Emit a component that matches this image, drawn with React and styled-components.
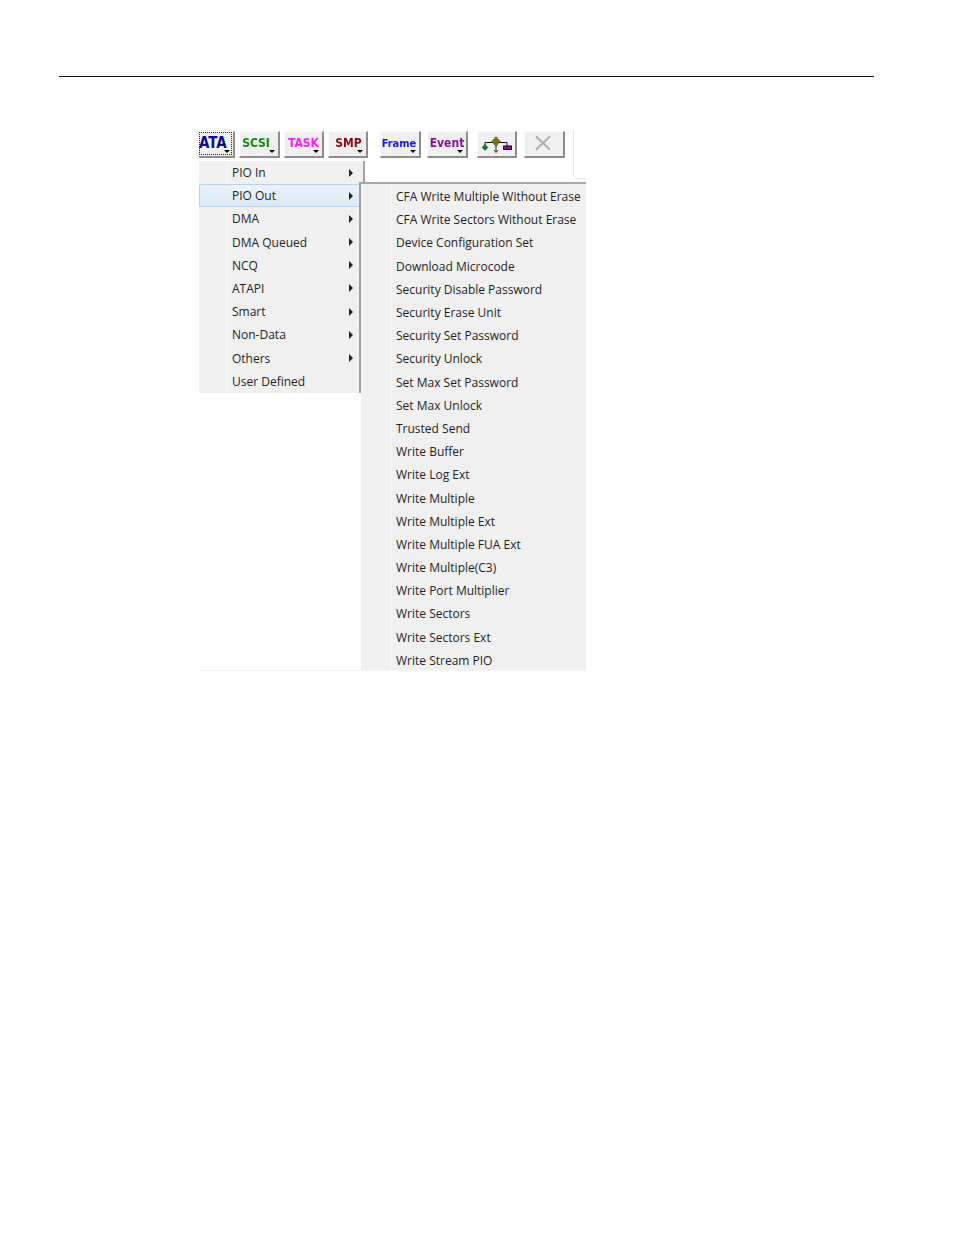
import React from 'react';
import styled, { createGlobalStyle } from 'styled-components';

const textButtons = [
  { label: 'SCSI', color: '#0a8a0a', width: 41, gap: 4, shift: -3 },
  { label: 'TASK', color: '#ff1cf0', width: 40, gap: 4, shift: 0 },
  { label: 'SMP', color: '#8b0a12', width: 40, gap: 4, shift: 1 },
  { label: 'Frame', color: '#1414ff', width: 41, gap: 12, shift: -1, size: 11 },
  { label: 'Event', color: '#8a0f96', width: 41, gap: 6, shift: 0 },
];

const mainItems = [
  { label: 'PIO In', arrow: true },
  { label: 'PIO Out', arrow: true, active: true },
  { label: 'DMA', arrow: true },
  { label: 'DMA Queued', arrow: true },
  { label: 'NCQ', arrow: true },
  { label: 'ATAPI', arrow: true },
  { label: 'Smart', arrow: true },
  { label: 'Non-Data', arrow: true },
  { label: 'Others', arrow: true },
  { label: 'User Defined' },
];

const subItems = [
  'CFA Write Multiple Without Erase',
  'CFA Write Sectors Without Erase',
  'Device Configuration Set',
  'Download Microcode',
  'Security Disable Password',
  'Security Erase Unit',
  'Security Set Password',
  'Security Unlock',
  'Set Max Set Password',
  'Set Max Unlock',
  'Trusted Send',
  'Write Buffer',
  'Write Log Ext',
  'Write Multiple',
  'Write Multiple Ext',
  'Write Multiple FUA Ext',
  'Write Multiple(C3)',
  'Write Port Multiplier',
  'Write Sectors',
  'Write Sectors Ext',
  'Write Stream PIO',
];

const App = () => {
  return (
    <Page>
      <GlobalStyle />
      <Rule />
      <Capture>
        <Toolbar>
          <AtaButton>
            <ToolLabel $color="#0a0a96" $size={15}>ATA</ToolLabel>
            <Caret />
          </AtaButton>
          {textButtons.map(b => (
            <ToolButton key={b.label} $width={b.width} $gap={b.gap}>
              <ToolLabel $color={b.color} $shift={b.shift} $size={b.size}>{b.label}</ToolLabel>
              <Caret />
            </ToolButton>
          ))}
          <ToolButton $width={40} $gap={9}>
            <svg width="36" height="20" viewBox="0 0 36 20">
              <path d="M6 12V8.5H28V13" fill="none" stroke="#111" strokeWidth="1" />
              <path d="M17 11V18M15 16L17 18.5L19 16" fill="none" stroke="#333" strokeWidth="1" />
              <path d="M17 2.5L21.5 7.5L17 12.5L12.5 7.5Z" fill="#7c7414" stroke="#555" strokeWidth="0.5" />
              <path d="M6 10.5L9 13.5L6 16.5L3 13.5Z" fill="#0a7a1a" stroke="#053" strokeWidth="0.5" />
              <rect x="24.5" y="12" width="8" height="3.5" fill="#8a0f96" stroke="#111" strokeWidth="1" />
            </svg>
          </ToolButton>
          <ToolButton $width={41} $gap={7}>
            <svg width="18" height="18" viewBox="0 0 18 18">
              <path d="M1 1.5L15 14.5M15 1.5L1 14.5" stroke="#aeaeae" strokeWidth="2" fill="none" />
            </svg>
          </ToolButton>
          <PanelCorner />
        </Toolbar>
        <Menus>
          <MainMenu>
            {mainItems.map(item => (
              <MainRow key={item.label} $active={item.active}>
                <ItemLabel>{item.label}</ItemLabel>
                {item.arrow && <Arrow />}
              </MainRow>
            ))}
          </MainMenu>
          <SubMenu>
            {subItems.map(item => (
              <SubRow key={item}>
                <ItemLabel>{item}</ItemLabel>
              </SubRow>
            ))}
          </SubMenu>
        </Menus>
      </Capture>
    </Page>
  );
};

export default App;

const GlobalStyle = createGlobalStyle`
  html, body {
    margin: 0;
    background: #fff;
  }
`;

const Page = styled.div`
  width: 954px;
  height: 1235px;
  padding-top: 76px;
  box-sizing: border-box;
  overflow: hidden;
`;

const Rule = styled.div`
  width: 815px;
  height: 1px;
  margin-left: 59px;
  background: #111;
`;

const Capture = styled.div`
  width: 387px;
  height: 541px;
  margin: 53px 0 0 199px;
  box-sizing: border-box;
  overflow: hidden;
  border-bottom: 1px solid #f5f5f5;
  font-family: "Open Sans", "Noto Sans", sans-serif;
  filter: blur(0.3px);
`;

const Toolbar = styled.div`
  display: flex;
  height: 31px;
  align-items: flex-start;
  padding-top: 1px;
  box-sizing: border-box;
`;

const ToolButton = styled.div`
  position: relative;
  flex: none;
  display: flex;
  align-items: center;
  justify-content: center;
  width: ${p => p.$width}px;
  height: 27px;
  margin-left: ${p => p.$gap || 0}px;
  box-sizing: border-box;
  background: #f0f0f0;
  border-style: solid;
  border-width: 1px 2px 2px 1px;
  border-color: #fcfcfc #8e8e8e #8e8e8e #fcfcfc;
`;

const AtaButton = styled(ToolButton)`
  width: 36px;
  border-left: none;
  justify-content: flex-start;

  &::before {
    content: '';
    position: absolute;
    inset: 0 1px 1px 0;
    border: 1px dotted #222;
  }
`;

const ToolLabel = styled.span`
  color: ${p => p.$color};
  font-family: "DejaVu Sans Condensed", "DejaVu Sans", sans-serif;
  font-size: ${p => p.$size || 12}px;
  font-weight: 700;
  margin-top: -2px;
  margin-left: ${p => (p.$shift || 0) * 2}px;
`;

const Caret = styled.span`
  position: absolute;
  right: 3px;
  bottom: 3px;
  width: 0;
  height: 0;
  border-left: 3px solid transparent;
  border-right: 3px solid transparent;
  border-top: 3px solid #000;
`;

const PanelCorner = styled.div`
  flex: none;
  width: 13px;
  height: 48px;
  margin-left: 8px;
  margin-top: -1px;
  border-left: 1px solid #e2e6ea;
  border-bottom: 1px solid #e2e6ea;
  border-bottom-left-radius: 5px;
`;

const Menus = styled.div`
  display: flex;
  align-items: flex-start;
`;

const MainMenu = styled.div`
  position: relative;
  flex: none;
  width: 166px;
  box-sizing: border-box;
  background: linear-gradient(to right, #f0f0f0 27px, #e2e3e3 27px, #fff 28px, #f0f0f0 29px);
  border-right: 2px solid #a0a0a0;

  /* edge the open submenu throws on the menu behind it */
  &::after {
    content: '';
    position: absolute;
    left: 160px;
    top: 21px;
    bottom: 0;
    width: 2px;
    background: #a0a0a0;
    z-index: 2;
  }
`;

const MainRow = styled.div`
  position: relative;
  display: flex;
  align-items: center;
  width: 161px;
  height: 23.2px;
  padding-left: 33px;
  box-sizing: border-box;
  ${p =>
    p.$active &&
    `
    background: linear-gradient(to bottom, #eef3fa, #dbe7f5);
    box-shadow: inset 0 0 0 1px #b8d2ee;
    border-radius: 2px;
  `}
`;

const ItemLabel = styled.span`
  color: #1f1f1f;
  font-size: 12px;
  white-space: nowrap;
`;

const Arrow = styled.span`
  position: absolute;
  left: 150px;
  top: 7.5px;
  width: 0;
  height: 0;
  border-top: 4px solid transparent;
  border-bottom: 4px solid transparent;
  border-left: 4px solid #222;
`;

const SubMenu = styled.div`
  position: relative;
  flex: none;
  width: 225px;
  margin: 21px 0 0 -4px;
  padding-top: 1px;
  box-sizing: border-box;
  background: linear-gradient(to right, #f0f0f0 29px, #e2e3e3 29px, #fff 30px, #f0f0f0 31px);
  border-top: 2px solid #a8a8a8;
`;

const SubRow = styled.div`
  display: flex;
  align-items: center;
  height: 23.2px;
  padding-left: 35px;
  box-sizing: border-box;
`;
